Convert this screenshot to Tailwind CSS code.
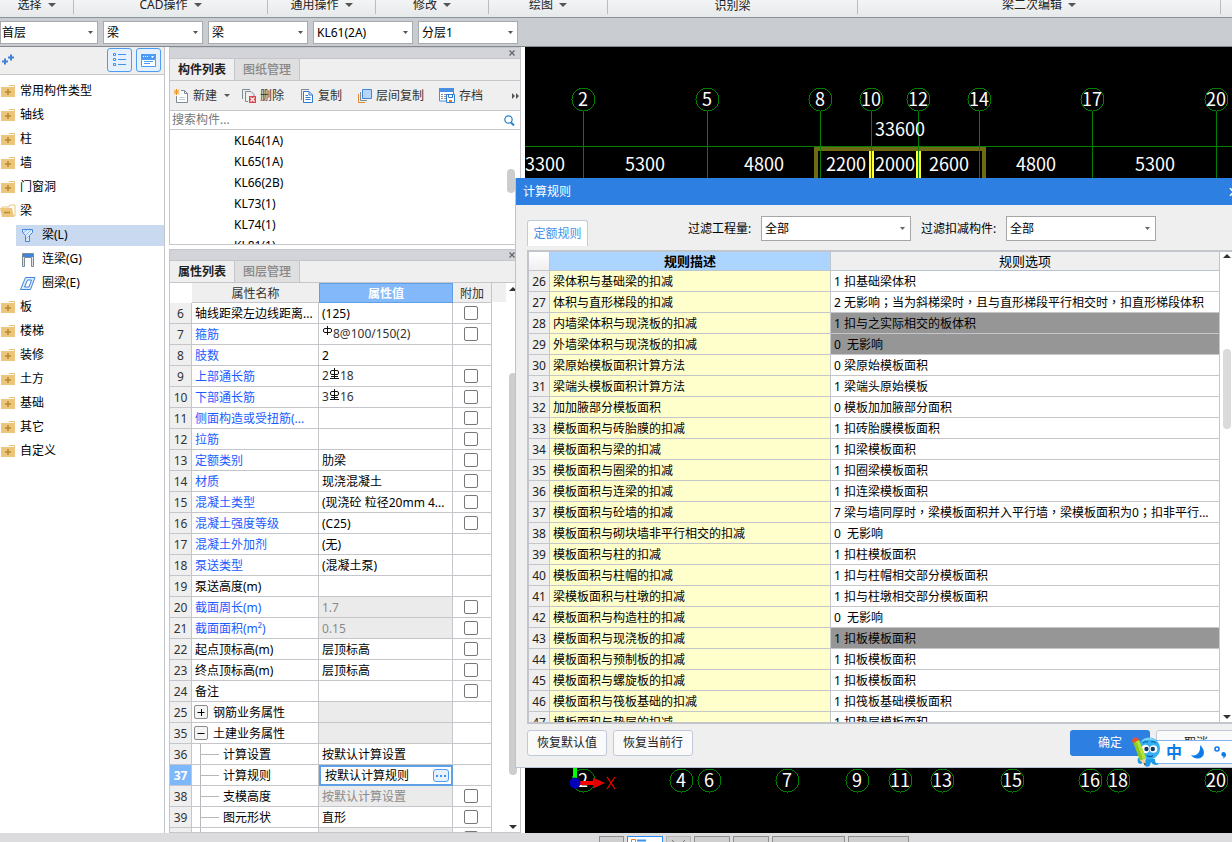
<!DOCTYPE html>
<html lang="zh-CN">
<head>
<meta charset="utf-8">
<title>计算规则</title>
<script src="https://cdn.jsdelivr.net/npm/@tailwindcss/browser@4"></script>
</head>
<body class="relative flex h-screen flex-col overflow-hidden bg-white font-['Noto_Sans','Noto_Sans_CJK_SC',sans-serif] text-[12px] leading-[20px] text-black">

<!-- ribbon group captions -->
<nav class="flex h-[18px] shrink-0 overflow-hidden border-b border-[#8b9298] bg-linear-to-b from-[#f3f4f5] to-[#e6e9ea] text-[#222]" id="ribbon"></nav>

<!-- floor / category selectors -->
<div class="flex h-[29px] shrink-0 items-center gap-[6px] border-b border-[#85898e] bg-[#c9ccd0]" id="selectors"></div>

<main class="flex min-h-0 flex-1">
  <!-- component tree -->
  <aside class="flex w-[165px] shrink-0 flex-col border-r border-[#c4c6cc]">
    <div class="flex h-[28px] shrink-0 items-start gap-[4px] border-b border-[#c4c6cc] bg-[#efefef] pt-px pr-[3px]">
      <button class="mr-auto pt-[6px] pl-[2px]" aria-label="添加">
        <svg class="block" width="13" height="13" viewBox="0 0 13 13" stroke="#3f82d6" stroke-width="2"><path d="M0 7.500h6M3 4.500v6M6 3.500h6M9 .500v6"/></svg>
      </button>
      <button class="flex h-6 w-[25px] items-center justify-center rounded-[3px] border border-[#4c9cf3] bg-[#e6f1fd]" aria-label="列表视图">
        <svg width="13" height="14" viewBox="0 0 13 14" fill="none" stroke="#3b93f2"><path d="M.5.500h2v2h-2zM.5 5.500h2v2h-2zM.5 10.500h2v2h-2zM5 1.500h8M5 6.500h8M5 11.500h8"/></svg>
      </button>
      <button class="flex h-6 w-[25px] items-center justify-center rounded-[3px] border border-[#4c9cf3] bg-[#e6f1fd]" aria-label="窗口视图">
        <svg width="15" height="13" viewBox="0 0 15 13"><path d="M0 0h15v5H0z" fill="#4c9cf3"/><path d="M2 2h1v1H2zM4 2h1v1H4zM6 2h1v1H6zM10 2h3l-1.500 2z" fill="#fff"/><path d="M.5 5.500h14v7H.5zM3 7.500h9M3 9.500h6" fill="#fff" stroke="#4c9cf3"/></svg>
      </button>
    </div>
    <ul class="pt-1" id="tree"></ul>
  </aside>

  <!-- component list and property list -->
  <section class="mx-1 flex w-[352px] shrink-0 flex-col">
    <div class="flex flex-col border border-b-0 border-[#c4c6cc]">
      <div class="flex h-[11px] items-center justify-end border-b border-[#c4c6cc] bg-[#d3d4da] pr-[5px]">
        <button aria-label="关闭构件列表"><svg class="block" width="6" height="6" viewBox="0 0 6 6" stroke="#666" stroke-width="1.300"><path d="M.5.500l5 5M5.500.500l-5 5"/></svg></button>
      </div>
      <div class="flex h-[22px] border-b border-[#c4c6cc] bg-[#efefef]">
        <button class="w-[65px] border-r border-[#c4c6cc] text-center font-bold text-[#222]">构件列表</button>
        <button class="w-[65px] border-r border-[#c4c6cc] bg-[#dfdfdf] text-center font-medium text-[#888]">图纸管理</button>
      </div>
      <div class="flex h-[30px] items-center border-b border-[#c4c6cc] bg-[#efefef] pl-1 text-[#333]">
        <button class="flex w-[68px] items-center gap-[5px]">
          <svg width="14" height="14" viewBox="0 0 14 14" fill="none"><path d="M7 1.500h3.500l3 3v9H2.500V7" fill="#fff" stroke="#7d8a94"/><path d="M10.500 1.500v3h3" stroke="#7d8a94"/><path d="M5 8.500h6M5 10.500h6" stroke="#c5cbd0"/><path d="M0 .500l5 5M5 .500l-5 5M2.500 0v6M0 3h5" stroke="#f0941e"/></svg>
          <span>新建</span><svg class="ml-[2px]" width="6" height="3" viewBox="0 0 6 3"><path d="M0 0h6L3 3z" fill="#555"/></svg>
        </button>
        <button class="flex w-[59px] items-center gap-1">
          <svg width="14" height="14" viewBox="0 0 14 14" fill="none" stroke="#7d8a94"><path d="M.5 10V.500H8"/><path d="M3.500 12.500v-10H9l3 3V7M3.500 12.500H6"/><path d="M7 7h7v7H7z" fill="#d9474c" stroke="none"/><path d="M8.500 8.500l4 4M12.500 8.500l-4 4" stroke="#fff" stroke-width="1.300"/></svg>
          <span>删除</span>
        </button>
        <button class="flex w-[57px] items-center gap-[5px]">
          <svg width="12" height="14" viewBox="0 0 12 14" fill="none"><path d="M.5 11V.500H8" stroke="#7d8a94"/><path d="M2.500 2.500H8l3.500 3.500v7.500h-9z" fill="#fff" stroke="#2f7bd1"/><path d="M8 2.500V6h3.500M4.500 6.500H7M4.500 8.500h5M4.500 10.500h5" stroke="#2f7bd1"/></svg>
          <span>复制</span>
        </button>
        <button class="flex w-[81px] items-center gap-1">
          <svg width="14" height="14" viewBox="0 0 14 14" fill="none"><path d="M.5 5v8.500H7" stroke="#e8862e"/><path d="M2.500 3v8.500H9" stroke="#7d8a94"/><path d="M4.500.500h9v9h-9z" fill="#b5d5fb" stroke="#3f86dc"/></svg>
          <span>层间复制</span>
        </button>
        <button class="flex items-center gap-1">
          <svg width="16" height="15" viewBox="0 0 16 15" fill="none"><path d="M.5.500h14V13H.500z" fill="#fff" stroke="#4a90e2"/><path d="M0 0h15v4H0z" fill="#4a90e2"/><path d="M2 6.500h2M5 6.500h8M2 8.500h2M5 8.500h3M2 10.500h2M5 10.500h2" stroke="#8a8f94"/><path d="M7.500 6.500h8v8h-8z" fill="#fff" stroke="#2f7bd1"/><path d="M9.500 7v2.500h4V7" stroke="#2f7bd1"/><path d="M10 12h3v2h-3z" fill="#f07818"/></svg>
          <span>存档</span>
        </button>
        <button class="mr-px ml-auto" aria-label="更多"><svg class="block" width="7" height="6" viewBox="0 0 7 6" fill="#555"><path d="M0 0l3 3-3 3zM4 0l3 3-3 3z"/></svg></button>
      </div>
      <label class="flex h-[19px] items-center border-b border-[#c4c6cc] bg-white pr-[5px] pl-[2px]">
        <input class="min-w-0 flex-1 leading-[18px] outline-none placeholder:text-[#777]" type="search" aria-label="搜索构件" placeholder="搜索构件...">
        <svg width="11" height="11" viewBox="0 0 11 11" fill="none" stroke="#2a82c8"><circle cx="4.500" cy="4.500" r="3.700" stroke-width="1.200"/><path d="M7 7.500l3 3" stroke-width="2"/></svg>
      </label>
    </div>
    <div class="flex h-[115px] justify-between overflow-hidden border border-t-0 border-[#c4c6cc] pr-[5px]">
      <ul class="pl-16 leading-[21px]"><li>KL64(1A)</li><li>KL65(1A)</li><li>KL66(2B)</li><li>KL73(1)</li><li>KL74(1)</li><li>KL81(1)</li></ul>
      <span class="mt-[39px] h-6 w-2 rounded bg-[#cdcdcd]"></span>
    </div>

    <div class="mt-1 flex min-h-0 flex-1 flex-col border border-[#c4c6cc]">
      <div class="flex h-[11px] shrink-0 items-center justify-end border-b border-[#c4c6cc] bg-[#d3d4da] pr-[5px]">
        <button aria-label="关闭属性列表"><svg class="block" width="6" height="6" viewBox="0 0 6 6" stroke="#666" stroke-width="1.300"><path d="M.5.500l5 5M5.500.500l-5 5"/></svg></button>
      </div>
      <div class="flex h-[22px] shrink-0 border-b border-[#c4c6cc] bg-[#efefef]">
        <button class="w-[65px] border-r border-[#c4c6cc] text-center font-bold text-[#222]">属性列表</button>
        <button class="w-[65px] border-r border-[#c4c6cc] bg-[#dfdfdf] text-center font-medium text-[#888]">图层管理</button>
      </div>
      <div class="flex min-h-0 flex-1 overflow-hidden">
        <div>
          <table class="w-[322px] table-fixed border-separate border-spacing-0">
            <colgroup><col class="w-[22px]"><col class="w-[127px]"><col class="w-[134px]"><col class="w-[39px]"></colgroup>
            <thead>
              <tr class="h-5 leading-[17px] text-[#333]">
                <th aria-label="序号"></th>
                <th class="border-b border-[#c4c6cc] bg-[#efefef] pt-[2px] font-normal">属性名称</th>
                <th class="border border-[#5f9fe6] bg-[#83b9fb] pt-px font-bold text-white">属性值</th>
                <th class="border-r border-b border-[#c4c6cc] bg-[#efefef] pt-[2px] font-normal">附加</th>
              </tr>
            </thead>
            <tbody id="props"></tbody>
          </table>
        </div>
        <span class="h-[19px] w-[14px] bg-[#efefef]"></span>
        <div class="flex w-[14px] flex-col items-center pt-1 pb-[3px]">
          <svg class="shrink-0" width="8" height="4" viewBox="0 0 8 4"><path d="M0 4h8L4 0z" fill="#333"/></svg>
          <span class="mt-[82px] h-[402px] w-2 shrink-0 rounded bg-[#cdcdcd]"></span>
          <svg class="mt-auto shrink-0" width="8" height="4" viewBox="0 0 8 4"><path d="M0 0h8L4 4z" fill="#333"/></svg>
        </div>
      </div>
    </div>
  </section>

  <!-- drawing area -->
  <section class="min-w-0 flex-1 bg-black" aria-label="绘图区">
    <svg class="block h-full w-full font-['Noto_Sans_CJK_SC',sans-serif] text-[18px]" id="plan">
      <g transform="translate(-525 -47)">
        <g shape-rendering="crispEdges">
          <path d="M816 178V149H984V178" fill="none" stroke="#6f6a14" stroke-width="4"/>
          <path d="M871.500 151v27M918.500 151v27" stroke="#ffff30" stroke-width="5"/>
          <path d="M525 146.500h707" stroke="#008000"/>
        </g>
        <g id="axes" shape-rendering="crispEdges" fill="none" stroke="#008000"></g>
        <g id="dims" fill="#fff" text-anchor="middle"></g>
        <path d="M575 767v16" stroke="#00ff00" stroke-width="4"/>
        <path d="M580 783h14" stroke="#f00" stroke-width="4"/><path d="M593 777.500l12 5.500-12 5.500z" fill="#e00000"/>
        <circle cx="575" cy="783" r="5.500" fill="#0000b8"/>
        <path d="M607 777l8 12M615 777l-8 12" stroke="#f00" stroke-width="1.200"/>
      </g>
    </svg>
  </section>
</main>

<footer class="flex h-[9px] shrink-0 items-start gap-[3px] overflow-hidden bg-[#dcdcde] pt-[3px] pl-[599px]">
  <button class="h-5 w-[25px] shrink-0 border border-[#8f8f8f] bg-[#cfcfcf]" aria-label="状态一"></button>
  <button class="h-5 w-[36px] shrink-0 border border-[#2f8df0] bg-white pl-[3px]" aria-label="状态二"><svg class="block h-[14px]" width="16" height="14" viewBox="0 0 16 14" fill="none"><path d="M.5.500h4v4h-4z" stroke="#f07818"/><path d="M6 1.500h9" stroke="#3b93f2" stroke-width="2"/></svg></button>
  <button class="h-5 w-[25px] shrink-0 border border-[#b5b5b5] bg-[#cfcfcf] pl-1" aria-label="状态三"><svg class="block" width="15" height="12" viewBox="0 0 15 12" stroke="#777"><path d="M1 0l5 5M14 0L9 5"/></svg></button>
  <button class="h-5 w-[36px] shrink-0 border border-[#8f8f8f] bg-[#cfcfcf]" aria-label="状态四"></button>
  <button class="h-5 w-[36px] shrink-0 border border-[#8f8f8f] bg-[#cfcfcf]" aria-label="状态五"></button>
  <button class="h-5 w-[73px] shrink-0 border border-[#8f8f8f] bg-[#cfcfcf]" aria-label="状态六"></button>
  <button class="h-5 w-[61px] shrink-0 border border-[#8f8f8f] bg-[#cfcfcf]" aria-label="状态七"></button>
</footer>

<!-- rule dialog, reaching past the right window edge -->
<div class="absolute top-[178px] -right-4 bottom-[74px] left-[515px] flex flex-col border-b border-l border-[#b9c3d3] bg-[#efefef]" role="dialog" aria-labelledby="dlg-title">
  <div class="flex h-[27px] shrink-0 items-center justify-between bg-[#2d7fe1] pr-[10px] pl-[7px] text-white">
    <h1 id="dlg-title">计算规则</h1>
    <button aria-label="关闭"><svg class="block" width="9" height="8" viewBox="0 0 9 8" stroke="#fff" stroke-width="1.500"><path d="M1 0l7 8M8 0L1 8"/></svg></button>
  </div>
  <div class="flex h-[45px] shrink-0 items-center pt-[2px] pl-[11px]">
    <button class="mr-[100px] mb-1 h-[26px] w-[61px] self-end rounded-t-[3px] border border-b-0 border-[#c3cbdb] bg-white text-[#4a8fe8]">定额规则</button>
    <label class="w-[73px]" for="f1">过滤工程量:</label>
    <span class="relative mr-[10px] w-[150px]">
      <select id="f1" class="h-[25px] w-full appearance-none border border-[#a6a6a6] bg-white pl-[3px] leading-[22px]"><option>全部</option></select>
      <svg class="pointer-events-none absolute top-[11px] right-[6px]" width="5" height="3" viewBox="0 0 5 3"><path d="M0 0h5L2.500 3z" fill="#666"/></svg>
    </span>
    <label class="w-[85px]" for="f2">过滤扣减构件:</label>
    <span class="relative w-[150px]">
      <select id="f2" class="h-[25px] w-full appearance-none border border-[#a6a6a6] bg-white pl-[3px] leading-[22px]"><option>全部</option></select>
      <svg class="pointer-events-none absolute top-[11px] right-[6px]" width="5" height="3" viewBox="0 0 5 3"><path d="M0 0h5L2.500 3z" fill="#666"/></svg>
    </span>
  </div>
  <div class="mr-3 ml-[11px] flex min-h-0 flex-1 overflow-hidden border-2 border-[#c2c5cb] bg-white">
    <div class="min-w-0 flex-1">
      <table class="w-full table-fixed border-separate border-spacing-0">
        <colgroup><col class="w-[21px]"><col class="w-[281px]"><col></colgroup>
        <thead>
          <tr class="h-[19px] text-[13px] leading-[18px]">
            <th class="border-r border-b border-[#c2c5cb] bg-linear-to-b from-white to-[#efefef]" aria-label="序号"></th>
            <th class="border-r border-b border-[#c2c5cb] bg-[#abd5ff] font-bold">规则描述</th>
            <th class="border-r border-b border-[#b9c3d3] bg-[#efefef] font-normal">规则选项</th>
          </tr>
        </thead>
        <tbody id="rules"></tbody>
      </table>
    </div>
    <div class="flex w-[14px] flex-col items-center pt-[2px] pb-[3px]">
      <svg class="shrink-0" width="8" height="4" viewBox="0 0 8 4"><path d="M0 4h8L4 0z" fill="#333"/></svg>
      <span class="mt-[91px] h-20 w-2 shrink-0 rounded bg-[#dadada]"></span>
      <svg class="mt-auto shrink-0" width="8" height="4" viewBox="0 0 8 4"><path d="M0 0h8L4 4z" fill="#333"/></svg>
    </div>
  </div>
  <div class="flex h-[43px] shrink-0 items-start gap-[6px] pt-[6px] pr-3 pl-[11px] text-[#222]">
    <button class="h-[26px] w-20 rounded-[3px] border border-[#c0c8da] bg-[#fafafa]">恢复默认值</button>
    <button class="mr-auto h-[26px] w-20 rounded-[3px] border border-[#c0c8da] bg-[#fafafa]">恢复当前行</button>
    <button class="h-[26px] w-20 rounded-[3px] bg-[#2d7fe1] text-white">确定</button>
    <button class="h-[26px] w-20 rounded-[3px] border border-[#c0c8da] bg-[#fafafa]">取消</button>
  </div>
</div>

<!-- floating input-method bar -->
<div class="absolute -right-8 bottom-[78px] flex h-[24px] w-[112px] items-center gap-[9px] border border-[#7fb2ee] bg-white pl-[13px]">
  <svg class="absolute -top-[5px] -left-[22px]" width="32" height="32" viewBox="0 0 32 32">
    <path d="M7 22c-1 4 0 6 3 6l3-3 1 5c2 1 4 1 5-1l1-3c2 3 5 4 8 2-3 0-4-2-4-5z" fill="#1c9be8"/>
    <circle cx="18" cy="12.500" r="11" fill="#35b0f2"/><path d="M10 6c3-5 12-6 16 0-5-3-10-3-16 0z" fill="#7ed3fb"/>
    <circle cx="14.500" cy="13" r="4.200" fill="#fff"/><circle cx="22.500" cy="13" r="3.800" fill="#fff"/>
    <circle cx="15.500" cy="13" r="2.200" fill="#123a66"/><circle cx="21.800" cy="13" r="2.200" fill="#123a66"/>
    <path d="M12 7c1-1 3-2 5-1M20 6c2-1 4 0 5 1" fill="none" stroke="#0e66b4" stroke-width="1.200"/>
    <path d="M16 19.500c2 1.500 4 1.500 6 0" fill="none" stroke="#0e5ca4" stroke-width="1.200"/>
    <path d="M2 6l6-2 7 18-6 3z" fill="#8cc81e"/><path d="M5 5l3-1 7 18-3 1z" fill="#b6e23c"/>
    <path d="M1 5c0-4 6-5 7-1L2 7z" fill="#f0502a"/><path d="M9 24.500l6-2.500-1 7z" fill="#f5cf98"/><path d="M12.500 27.500l1.700-.500-.200 2.500z" fill="#333"/>
  </svg>
  <span class="text-[16px] font-bold text-[#0f7be8]">中</span>
  <svg width="14" height="14" viewBox="0 0 14 14"><path d="M9 0c6 5 5 13-2 13.500C4 13.700 1 12 0 10c6 2 10-3 9-10z" fill="#0f7be8"/></svg>
  <svg width="13" height="13" viewBox="0 0 13 13" fill="none"><circle cx="3" cy="3" r="2" stroke="#0f7be8" stroke-width="1.600"/><path d="M9.500 6a2.200 2.200 0 1 0 0 4.400C9.500 11.500 9 12 8 12.700 11 12 12 10.500 12 8.500 12 7 11 6 9.500 6z" fill="#0f7be8"/></svg>
  <svg width="14" height="13" viewBox="0 0 14 13"><path d="M1 2l4-1c1 2 3 2 4 0l4 1v4h-2v6H3V6H1z" fill="#0f7be8"/></svg>
</div>

<script>
const put = (id, html) => { document.getElementById(id).innerHTML = html; };

const ribbonWidths = ['w-[74px]', 'w-[194px]', 'w-[108px]', 'w-[113px]', 'w-[119px]', 'w-[250px]', 'w-[363px]'];
const arrow = '<svg width="8" height="4" viewBox="0 0 8 4"><path d="M0 0h8L4 4z" fill="#555"/></svg>';
put('ribbon', ['选择', 'CAD操作', '通用操作', '修改', '绘图', '识别梁', '梁二次编辑'].map((t, i) =>
  `<div class="${ribbonWidths[i]} h-[14px] shrink-0 border-r border-[#b9bdc1]"><button class="${i === 5 ? '-mt-1' : '-mt-[5px]'} flex w-full items-center justify-center gap-[6px] whitespace-nowrap">${t}${i === 5 ? '' : arrow}</button></div>`).join(''));

put('selectors', [['首层', '楼层'], ['梁', '构件大类'], ['梁', '构件类型'], ['KL61(2A)', '构件'], ['分层1', '分层']].map(([t, n], i) =>
  `<span class="relative ${i ? 'w-[100px]' : 'w-[98px]'} -mr-px"><select aria-label="${n}" class="block h-[23px] w-full appearance-none border border-[#a8abae] bg-white ${i ? 'pl-[3px]' : 'pl-px'} pt-px leading-[20px]"><option>${t}</option></select><svg class="pointer-events-none absolute top-[10px] right-[5px]" width="5" height="3" viewBox="0 0 5 3"><path d="M0 0h5L2.500 3z" fill="#555"/></svg></span>`).join(''));

const closed = '<svg width="15" height="14" viewBox="0 0 15 14"><path d="M1 3h7l1-2h6v12H1z" fill="#ecc67c"/><path d="M8 2.500h6" stroke="#fff" /><path d="M5 8h6M8 5v6" stroke="#b98a2c" stroke-width="1.500"/></svg>';
const open = '<svg width="16" height="14" viewBox="0 0 16 14"><path d="M2 3h7l1-2h5v11H4z" fill="#fff" stroke="#ecc67c"/><path d="M0 4h12l2 9H2z" fill="#ecc67c"/><path d="M4 8.500h6" stroke="#b98a2c" stroke-width="1.500"/></svg>';
const kinds = {
  '梁(L)': '<path d="M2.500 1.500h10v3l-3 3v6H5.500v-6l-3-3z" fill="#dcebfc" stroke="#3f86dc"/><path d="M3 5l4-3M6 7l5-5M6 11l3-3" stroke="#8dbaf0"/>',
  '连梁(G)': '<path d="M2.500 1.500h11v13h-2v-9h-7v9h-2z" fill="#dfe4e8" stroke="#7d8a94"/><path d="M3 2h10v3H3z" fill="#3f86dc"/>',
  '圈梁(E)': '<path d="M5.500 1.500h9.500l-4.500 12H.500zM7.500 4h4l-2.500 7H4.500z" fill="#dcebfc" fill-rule="evenodd" stroke="#3f86dc"/>'
};
put('tree', ['常用构件类型', '轴线', '柱', '墙', '门窗洞', '梁', '梁(L)', '连梁(G)', '圈梁(E)', '板', '楼梯', '装修', '土方', '基础', '其它', '自定义'].map(t =>
  kinds[t]
    ? `<li class="flex h-6 items-center pl-4"><button class="flex h-[21px] flex-1 items-center gap-[6px] pl-1 ${t === '梁(L)' ? 'bg-[#c9d9f0]' : ''}"><svg width="16" height="15" viewBox="0 0 16 15">${kinds[t]}</svg>${t}</button></li>`
    : `<li class="flex h-6 items-center"><button class="flex items-center"><span class="w-5">${t === '梁' ? open : closed}</span>${t}</button></li>`).join(''));

const bar = (grade) => `<svg class="mb-[6px] inline" width="11" height="11" viewBox="0 0 11 11" fill="none" stroke="#111"><rect x="1.500" y="2.500" width="8" height="4" rx="1.500"/><path d="M5.500 0v${grade > 2 ? 10 : 9}${grade > 2 ? 'M2 8.500h7M1 10.500h9' : ''}"/></svg>`;
// [number, name, value, has checkbox, name style, value style]
const props = [
  [6, '轴线距梁左边线距离...', '(125)', 1, 'k'], [7, '箍筋', bar(2) + '8@100/150(2)', 1, 'b', 'd'], [8, '肢数', '2', 0, 'b'],
  [9, '上部通长筋', '2' + bar(3) + '18', 1, 'b', 'd'], [10, '下部通长筋', '3' + bar(3) + '16', 1, 'b', 'd'], [11, '侧面构造或受扭筋(...', '', 1, 'b'],
  [12, '拉筋', '', 1, 'b'], [13, '定额类别', '肋梁', 1, 'b'], [14, '材质', '现浇混凝土', 1, 'b'], [15, '混凝土类型', '(现浇砼 粒径20mm 4...', 1, 'b'],
  [16, '混凝土强度等级', '(C25)', 1, 'b'], [17, '混凝土外加剂', '(无)', 0, 'b'], [18, '泵送类型', '(混凝土泵)', 0, 'b'], [19, '泵送高度(m)', '', 0, 'k'],
  [20, '截面周长(m)', '1.7', 1, 'b', 'g'], [21, '截面面积(m²)', '0.15', 1, 'b', 'g'], [22, '起点顶标高(m)', '层顶标高', 1, 'k'], [23, '终点顶标高(m)', '层顶标高', 1, 'k'],
  [24, '备注', '', 1, 'k'], [25, '钢筋业务属性', '', 0, '+', 'g'], [35, '土建业务属性', '', 0, '-', 'g'], [36, '计算设置', '按默认计算设置', 0, 't'],
  [37, '计算规则', '', 0, 't', 's'], [38, '支模高度', '按默认计算设置', 1, 't', 'g'], [39, '图元形状', '直形', 1, 't'], ['', '', '', 1, 't', 'g']
];
const nameCell = (n, s) => {
  if (s === 't') return `<span class="flex h-5 items-center"><span class="ml-2 h-5 w-px bg-[#b5b7bb]"></span><span class="mr-1 h-px w-[18px] bg-[#b5b7bb]"></span><span class="pt-[2px]">${n}</span></span>`;
  if (s === '+' || s === '-') return `<span class="flex h-5 items-center gap-[5px] pl-[2px]"><button aria-label="${s === '+' ? '展开' : '收起'}" class="flex h-[14px] w-[14px] items-center justify-center rounded-[2px] border border-[#8a8a8a] bg-[#f4f4f4]"><svg width="8" height="8" viewBox="0 0 8 8" stroke="#000"><path d="M.5 4.500h7${s === '+' ? 'M4.500 1v7' : ''}"/></svg></button><span class="pt-[2px]">${n}</span></span>`;
  return `<span class="block pt-[2px] pl-[3px] ${s === 'b' ? 'text-[#1a5cff]' : ''}">${n}</span>`;
};
const valueLook = { d: 'pl-[3px] text-[#333]', g: 'bg-[#ebebeb] pt-[2px] pl-[3px] text-[#8a8a8a]' };
put('props', props.map(([no, n, v, c, s, vs]) => `<tr class="h-[21px] leading-[18px]">
  <td class="border-r border-b border-[#c4c6cc] pt-[2px] text-center ${vs === 's' ? 'bg-[#7fb7fb] font-bold text-white' : 'bg-[#efefef] text-[#333]'}">${no}</td>
  <td class="overflow-hidden border-r border-b border-[#c4c6cc] whitespace-nowrap">${nameCell(n, s)}</td>
  ${vs === 's'
    ? '<td><span class="flex h-[21px] items-center justify-between border-2 border-[#5f9fe6] pr-[2px] pl-1 leading-[17px]"><input aria-label="计算规则" class="w-24 outline-none" value="按默认计算规则"><button aria-label="打开计算规则" class="flex h-[13px] w-4 items-center justify-center gap-[2px] rounded-[3px] border border-[#4c9cf3] bg-[#e6f1fd]"><i class="h-[2px] w-[2px] bg-[#3b93f2]"></i><i class="h-[2px] w-[2px] bg-[#3b93f2]"></i><i class="h-[2px] w-[2px] bg-[#3b93f2]"></i></button></span></td>'
    : `<td class="overflow-hidden border-r border-b border-[#c4c6cc] whitespace-nowrap ${valueLook[vs] || 'pt-[2px] pl-[3px]'}">${v}</td>`}
  <td class="border-r border-b border-[#c4c6cc] pr-[2px]">${c ? `<input type="checkbox" aria-label="附加 ${n}" class="mx-auto block h-[14px] w-[14px] appearance-none rounded-[2px] border border-[#777] bg-white">` : ''}</td></tr>`).join(''));

const rules = [
  ['梁体积与基础梁的扣减', '1 扣基础梁体积'], ['体积与直形梯段的扣减', '2 无影响；当为斜梯梁时，且与直形梯段平行相交时，扣直形梯段体积'],
  ['内墙梁体积与现浇板的扣减', '1 扣与之实际相交的板体积', 1], ['外墙梁体积与现浇板的扣减', '0&nbsp; 无影响', 1], ['梁原始模板面积计算方法', '0 梁原始模板面积'],
  ['梁端头模板面积计算方法', '1 梁端头原始模板'], ['加加腋部分模板面积', '0 模板加加腋部分面积'], ['模板面积与砖胎膜的扣减', '1 扣砖胎膜模板面积'],
  ['模板面积与梁的扣减', '1 扣梁模板面积'], ['模板面积与圈梁的扣减', '1 扣圈梁模板面积'], ['模板面积与连梁的扣减', '1 扣连梁模板面积'],
  ['模板面积与砼墙的扣减', '7 梁与墙同厚时，梁模板面积并入平行墙，梁模板面积为0；扣非平行...'], ['模板面积与砌块墙非平行相交的扣减', '0&nbsp; 无影响'],
  ['模板面积与柱的扣减', '1 扣柱模板面积'], ['模板面积与柱帽的扣减', '1 扣与柱帽相交部分模板面积'], ['梁模板面积与柱墩的扣减', '1 扣与柱墩相交部分模板面积'],
  ['模板面积与构造柱的扣减', '0&nbsp; 无影响'], ['模板面积与现浇板的扣减', '1 扣板模板面积', 1], ['模板面积与预制板的扣减', '1 扣板模板面积'],
  ['模板面积与螺旋板的扣减', '1 扣板模板面积'], ['模板面积与筏板基础的扣减', '1 扣筏板基础模板面积'], ['模板面积与垫层的扣减', '1 扣垫层模板面积']
];
// centred full-width punctuation
const centred = (s) => s.replace(/[，；]/g, (m) => `<span lang="zh-TW" class="font-['Noto_Sans_CJK_TC',sans-serif] leading-none">${m}</span>`);
put('rules', rules.map(([d, o, dark], i) => `<tr class="h-[21px] leading-[18px]">
  <td class="border-r border-b border-[#c4c6cc] bg-[#efefef] pt-[2px] text-center text-[#222]">${26 + i}</td>
  <td class="border-r border-b border-[#c4c6cc] bg-[#ffffcc] pt-[2px] pl-[3px] whitespace-nowrap">${d}</td>
  <td class="overflow-hidden border-r border-b border-[#c4c6cc] pt-[2px] pl-[3px] whitespace-nowrap ${dark ? 'bg-[#969696]' : ''}">${centred(o)}</td></tr>`).join(''));

// axis bubbles above and below, and the dimension figures between them
const top_ = [[583, 2], [707, 5], [820, 8], [871, 10], [918, 12], [979, 14], [1092, 17], [1216, 20]];
const bottom_ = [[583, 2], [681, 4], [709, 6], [787, 7], [857, 9], [900, 11], [942, 13], [1012, 15], [1090, 16], [1118, 18], [1216, 20]];
const nums = [[545, 164, 3300], [645, 164, 5300], [764, 164, 4800], [846, 164, 2200], [895, 164, 2000], [949, 164, 2600], [1036, 164, 4800], [1155, 164, 5300], [900, 129, 33600]];
const octo = (x, y) => `<circle cx="${x + 0.5}" cy="${y + 0.5}" r="11.500"/>`;
put('axes', top_.map(([x]) => octo(x, 99) + `<path d="M${x + 0.5} 111v67"/>`).join('') + bottom_.map(([x]) => octo(x, 780)).join(''));
put('dims', [...top_.map(([x, n]) => [x, 99, n]), ...bottom_.map(([x, n]) => [x, 780, n]), ...nums].map(([x, y, n]) => `<text x="${x}" y="${y + 7}">${n}</text>`).join(''));
</script>
</body>
</html>
